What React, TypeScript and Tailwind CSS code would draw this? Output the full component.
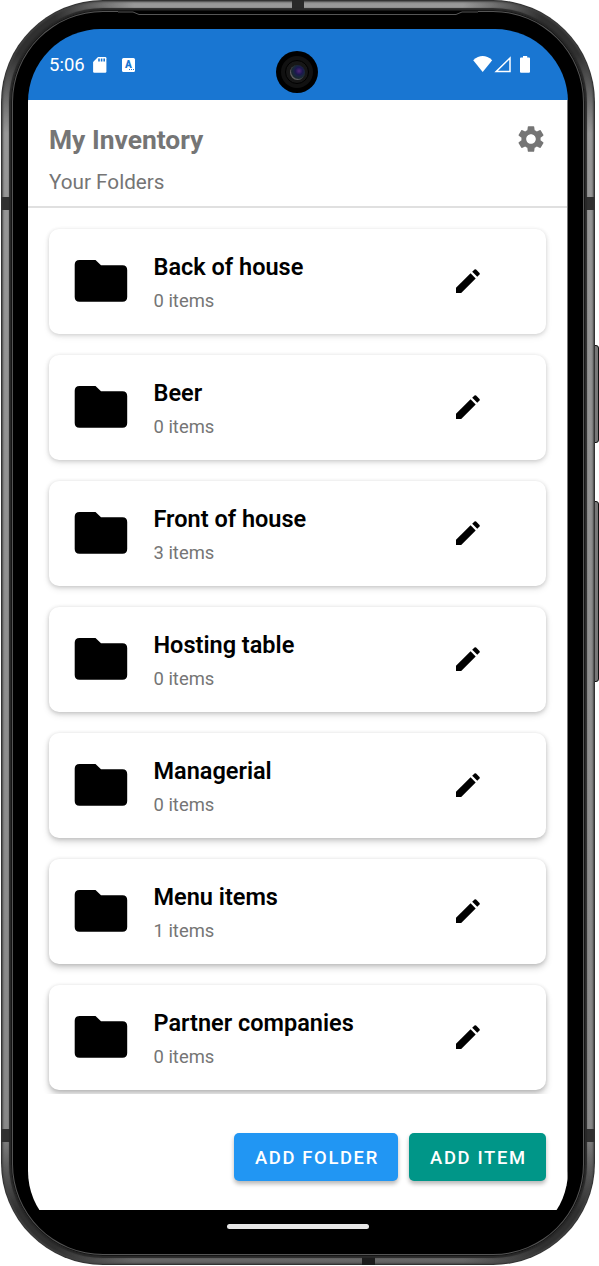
import { MdSettings } from "react-icons/md";

const folders = [
  { name: "Back of house", count: 0, shadow: "shadow-[0_1px_4px_rgba(0,0,0,0.15),0_3px_7px_rgba(0,0,0,0.07)]" },
  { name: "Beer", count: 0, shadow: "shadow-[0_1px_4px_rgba(0,0,0,0.16),0_3px_7px_rgba(0,0,0,0.09)]" },
  { name: "Front of house", count: 3, shadow: "shadow-[0_1px_4px_rgba(0,0,0,0.17),0_3px_7px_rgba(0,0,0,0.1)]" },
  { name: "Hosting table", count: 0, shadow: "shadow-[0_1px_4px_rgba(0,0,0,0.17),0_3px_7px_rgba(0,0,0,0.13)]" },
  { name: "Managerial", count: 0, shadow: "shadow-[0_1px_4px_rgba(0,0,0,0.17),0_4px_7px_rgba(0,0,0,0.15)]" },
  { name: "Menu items", count: 1, shadow: "shadow-[0_1px_4px_rgba(0,0,0,0.17),0_4px_7px_rgba(0,0,0,0.17)]" },
  { name: "Partner companies", count: 0, shadow: "shadow-[0_1px_4px_rgba(0,0,0,0.17),0_5px_7px_rgba(0,0,0,0.19)]" },
];

function FolderIcon() {
  return (
    <svg width="54" height="44" viewBox="0 0 54 44" className="shrink-0">
      <path d="M5.5 1H21.5L27 6.2H48.5Q53.2 6.2 53.2 11V38Q53.2 42.8 48.5 42.8H5.5Q.7 42.8 .7 38V5.8Q.7 1 5.5 1Z" />
    </svg>
  );
}

function PencilIcon() {
  return (
    <svg width="26" height="26" viewBox="0 0 26 26">
      <path d="M1 19.8V25H6.2L20.7 10.4L15.6 5.3Z" />
      <path d="M17.2 3.7L19.5 1.5Q20.3.8 21.1 1.5L24.5 4.9Q25.2 5.7 24.5 6.5L22.3 8.8Z" />
    </svg>
  );
}

function StatusBar() {
  return (
    <div className="relative flex h-[71px] shrink-0 justify-between bg-[#1976d2] pl-[21px] pr-[37px] text-white">
      <div className="flex h-[71px] items-center">
        <span className="w-[44px] pt-px text-[18.5px] leading-none">5:06</span>
        <svg width="14" height="18" viewBox="0 0 14 18">
          <path d="M5 1H12.2Q13.4 1 13.4 2.2V15.4Q13.4 16.7 12.2 16.7H1.3Q.1 16.7 .1 15.4V6Z" fill="#fff" />
          <path d="M5.2 2.6H6.8V5.5H5.2ZM7.8 2.6H9.4V5.5H7.8ZM10.4 2.6H12V5.5H10.4Z" fill="#1976d2" />
        </svg>
        <div className="ml-[15px] flex h-[14px] w-[13px] flex-col items-center rounded-[1.5px] bg-white text-[#1976d2]">
          <span className="h-[11px] text-[10px] font-black leading-[13px]">A</span>
          <div className="flex gap-px self-end pr-px">
            <i className="size-px bg-[#1976d2]" /><i className="size-px bg-[#1976d2]" /><i className="size-px bg-[#1976d2]" />
          </div>
        </div>
      </div>
      <svg width="58" height="18" viewBox="0 0 58 18" className="mt-[27px]">
        <path d="M.2 4.2Q9.7-4 19.2 4.2L9.7 16Z" fill="#fff" />
        <path d="M37 2V15.4H23.2Z" fill="none" stroke="#fff" strokeWidth="1.5" />
        <path d="M50 0H54.2V1.5H56Q57 1.5 57 2.5V15.7Q57 16.7 56 16.7H48Q47 16.7 47 15.7V2.5Q47 1.5 48 1.5H50Z" fill="#fff" />
      </svg>
      <div className="absolute left-[248px] top-[22px] flex size-[42px] items-center justify-center rounded-full bg-black">
        <div className="flex size-[32px] items-center justify-center rounded-full bg-[#111]">
          <div className="flex size-[24px] items-center justify-center rounded-full border border-black bg-[#171717]">
            <div className="size-[15px] rounded-full bg-[radial-gradient(circle_at_60%_40%,#52267a_0%,#1d1750_28%,#182a38_50%,#101014_75%)] shadow-[inset_1px_-1px_1px_#666]" />
          </div>
        </div>
      </div>
    </div>
  );
}

export default function App() {
  return (
    <div className="relative h-[1266px] w-[599px] overflow-hidden bg-white pl-px font-['Roboto',sans-serif]">
      <div className="absolute left-[593px] top-[345px] h-[98px] w-[6px] rounded-r-[3px] border border-[#111] bg-[#777]" />
      <div className="absolute left-[593px] top-[501px] h-[181px] w-[6px] rounded-r-[3px] border border-[#111] bg-[#777]" />
      <div className="relative h-[1265px] w-[594px] overflow-hidden rounded-[102px] bg-[radial-gradient(circle_at_25px_25px,#303030_30px,transparent_110px),radial-gradient(circle_at_570px_25px,#303030_30px,transparent_110px),radial-gradient(circle_at_25px_1240px,#303030_30px,transparent_110px),radial-gradient(circle_at_570px_1240px,#303030_30px,transparent_110px),linear-gradient(#999,#888_90%,#666)] p-[10px] pb-[9px] shadow-[inset_0_0_0_1px_#333,inset_0_0_2px_2px_#444]">
        <i className="absolute left-[291px] top-0 h-[12px] w-[12px] bg-[#292929]" />
        <i className="absolute left-[361px] top-[1256px] h-[9px] w-[13px] bg-[#1b1b1b]" />
        <i className="absolute left-0 top-[197px] h-[13px] w-[10px] bg-[#303030]" />
        <i className="absolute left-[584px] top-[197px] h-[13px] w-[10px] bg-[#303030]" />
        <i className="absolute left-0 top-[1129px] h-[13px] w-[10px] bg-[#303030]" />
        <i className="absolute left-[584px] top-[1129px] h-[13px] w-[10px] bg-[#303030]" />
        <div className="relative h-full rounded-[92px] bg-black px-[17px] pb-[12px] pt-[19px] shadow-[0_0_1px_2px_#292929,inset_0_0_0_1px_#151515,inset_0_0_0_2px_#555]">
          <svg width="360" height="5" viewBox="0 0 360 5" className="absolute left-[107px] top-px">
            <path d="M0 0H360V4H0Z" />
            <path d="M0 1H15L21 3.5H338L344 1H360" fill="none" stroke="#555" />
          </svg>
          <div className="flex h-full flex-col overflow-hidden rounded-[73px] bg-black">
            <StatusBar />
            <main className="-ml-px flex h-[1110px] shrink-0 flex-col border-x border-[#aaa] border-r-[#777] bg-white">
              <header className="flex h-[108px] shrink-0 items-start justify-between border-b-2 border-[#e0e0e0] pl-[21px] pr-[20px]">
                <div>
                  <h1 className="mt-[24px] text-[26.4px] font-bold leading-8 text-[#757575]">My Inventory</h1>
                  <p className="mt-[14px] text-[20.7px] leading-6 text-[#757575]">Your Folders</p>
                </div>
                <MdSettings size={32} color="#757575" className="mt-[23px]" />
              </header>
              <div className="flex h-[886px] shrink-0 flex-col gap-[21px] overflow-hidden pl-[20.6px] pr-[20.6px] pt-[20.6px]">
                {folders.map((folder) => (
                  <article key={folder.name} className={`flex h-[105px] shrink-0 items-center rounded-[10px] bg-white pl-[25.4px] pr-[65.4px] ${folder.shadow}`}>
                    <FolderIcon />
                    <div className="ml-[25.5px] grow pt-[4px]">
                      <h2 className="text-[23.5px] font-semibold leading-7 text-black">{folder.name}</h2>
                      <p className="mt-[8px] text-[18.4px] leading-6 text-[#757575]">{folder.count} items</p>
                    </div>
                    <PencilIcon />
                  </article>
                ))}
              </div>
              <footer className="flex justify-end gap-[11px] pr-[20.6px] pt-[39.4px]">
                <button className="h-[48px] w-[164px] rounded-[5px] bg-[#2196f3] pl-px pt-px text-[18.4px] font-medium tracking-[1.65px] text-white shadow-[0_3px_4px_rgba(0,0,0,0.28)]">ADD FOLDER</button>
                <button className="h-[48px] w-[137px] rounded-[5px] bg-[#009688] pl-px pt-px text-[18.4px] font-medium tracking-[1.65px] text-white shadow-[0_3px_4px_rgba(0,0,0,0.28)]">ADD ITEM</button>
              </footer>
            </main>
            <div className="flex justify-center pr-px pt-[13.6px]">
              <div className="h-[5px] w-[142px] rounded-full bg-[#e6e6e6]" />
            </div>
          </div>
        </div>
      </div>
    </div>
  );
}
